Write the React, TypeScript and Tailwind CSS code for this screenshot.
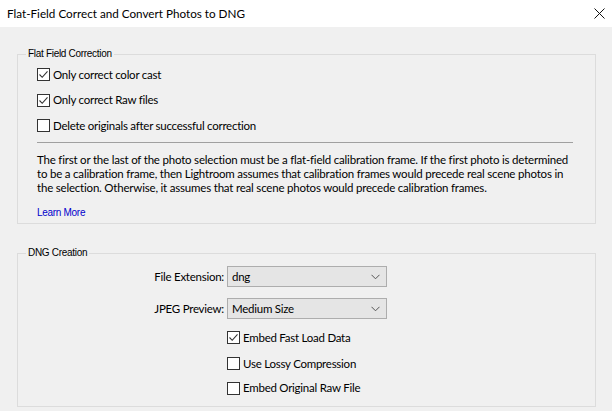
function Check({ checked, label }: { checked?: boolean; label: string }) {
  return (
    <label className="flex items-center gap-[3px] text-[11.5px] tracking-[-0.25px] text-black whitespace-nowrap">
      <span className="w-[13px] h-[13px] border border-[#333333] bg-white flex items-center justify-center shrink-0">
        {checked && (
          <svg width="11" height="11" viewBox="0 0 11 11">
            <path d="M1.5 5.5 L4.2 8.3 L9.5 2.3" fill="none" stroke="#333333" strokeWidth="1.1" />
          </svg>
        )}
      </span>
      <span>{label}</span>
    </label>
  );
}

function Select({ value }: { value: string }) {
  return (
    <div className="w-[160px] h-[21px] border border-[#adadad] bg-[#e5e5e5] flex items-center justify-between pl-[4px] pr-[6px] text-[11.5px] tracking-[-0.25px] text-black">
      <span>{value}</span>
      <svg width="9" height="6" viewBox="0 0 9 6">
        <path d="M0.5 0.8 L4.5 4.8 L8.5 0.8" fill="none" stroke="#555555" strokeWidth="1" />
      </svg>
    </div>
  );
}

const legendFont = { fontFamily: '"Liberation Sans", sans-serif' };

export default function App() {
  return (
    <div className="w-[612px] h-[411px] bg-[#f0f0f0] overflow-hidden" style={{ fontFamily: 'Lato, "Noto Sans", sans-serif' }}>
      <div className="h-[27px] bg-white flex items-center justify-between pl-[7px] pr-[7px]">
        <span className="text-[11.7px] text-black">Flat-Field Correct and Convert Photos to DNG</span>
        <svg width="11" height="11" viewBox="0 0 11 11">
          <path d="M0.5 0.5 L10.5 10.5 M10.5 0.5 L0.5 10.5" stroke="#111" strokeWidth="1" />
        </svg>
      </div>

      <div className="pl-[17px] pr-[16px]">
        <fieldset className="mt-[21px] h-[176px] border border-[#dcdcdc] p-0">
          <legend className="ml-[8px] px-[2px] text-[10px] leading-[12px] text-black tracking-[-0.3px]" style={legendFont}>
            Flat Field Correction
          </legend>
          <div className="pl-[19px] pr-[22px]">
            <div className="pt-[2px] flex flex-col">
              <div className="h-[25px] flex items-center"><Check checked label="Only correct color cast" /></div>
              <div className="h-[26px] flex items-center"><Check checked label="Only correct Raw files" /></div>
              <div className="h-[25px] flex items-center"><Check label="Delete originals after successful correction" /></div>
            </div>
            <div className="mt-[4px] h-px bg-[#a0a0a0]" />
            <p className="mt-[10px] text-[11.5px] tracking-[-0.2px] leading-[14px] text-black whitespace-nowrap">
              The first or the last of the photo selection must be a flat-field calibration frame. If the first photo is determined
              <br />
              to be a calibration frame, then Lightroom assumes that calibration frames would precede real scene photos in
              <br />
              the selection. Otherwise, it assumes that real scene photos would precede calibration frames.
            </p>
            <div className="mt-[12px] text-[10px] leading-[12px] text-[#0000cc] tracking-[-0.3px]" style={legendFont}>
              Learn More
            </div>
          </div>
        </fieldset>

        <fieldset className="mt-[23px] h-[160px] border border-[#dcdcdc] p-0">
          <legend className="ml-[8px] px-[2px] text-[10px] leading-[12px] text-black tracking-[-0.3px]" style={legendFont}>
            DNG Creation
          </legend>
          <div className="pt-[7px] grid grid-cols-[206px_auto] gap-x-[3px] items-center">
            <div className="text-right text-[11.5px] tracking-[-0.25px] text-black">File Extension:</div>
            <Select value="dng" />
            <div className="col-span-2 h-[11px]" />
            <div className="text-right text-[11.5px] tracking-[-0.25px] text-black">JPEG Preview:</div>
            <Select value="Medium Size" />
            <div />
            <div className="flex flex-col pt-[5px]">
              <div className="h-[27px] flex items-center"><Check checked label="Embed Fast Load Data" /></div>
              <div className="h-[25px] flex items-center"><Check label="Use Lossy Compression" /></div>
              <div className="h-[24px] flex items-center"><Check label="Embed Original Raw File" /></div>
            </div>
          </div>
        </fieldset>
      </div>
    </div>
  );
}
